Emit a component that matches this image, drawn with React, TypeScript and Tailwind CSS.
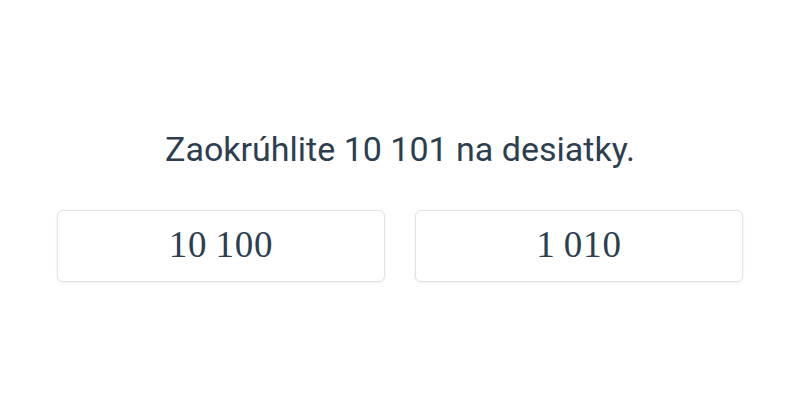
export default function App() {
    const options = ["10\u2009100", "1\u2009010"]

    return (
        <div className="w-[800px] h-[400px] bg-white flex flex-col items-center pt-[129px] text-[#2c3e50]">
            <h1 className="text-[34px] leading-[40px] font-['Roboto',sans-serif] mb-[41px]">
                Zaokrúhlite 10 101 na desiatky.
            </h1>
            <div className="flex gap-[30px]">
                {options.map((opt) => (
                    <button
                        key={opt}
                        className="w-[328px] h-[72px] pb-[2px] bg-white border border-[#e2e2e2] rounded-[6px] shadow-[0_1px_3px_rgba(0,0,0,0.08)] flex items-center justify-center font-['Liberation_Serif',serif] text-[37px] tracking-[0.8px] text-[#2c3e50]"
                    >
                        {opt}
                    </button>
                ))}
            </div>
        </div>
    )
}
